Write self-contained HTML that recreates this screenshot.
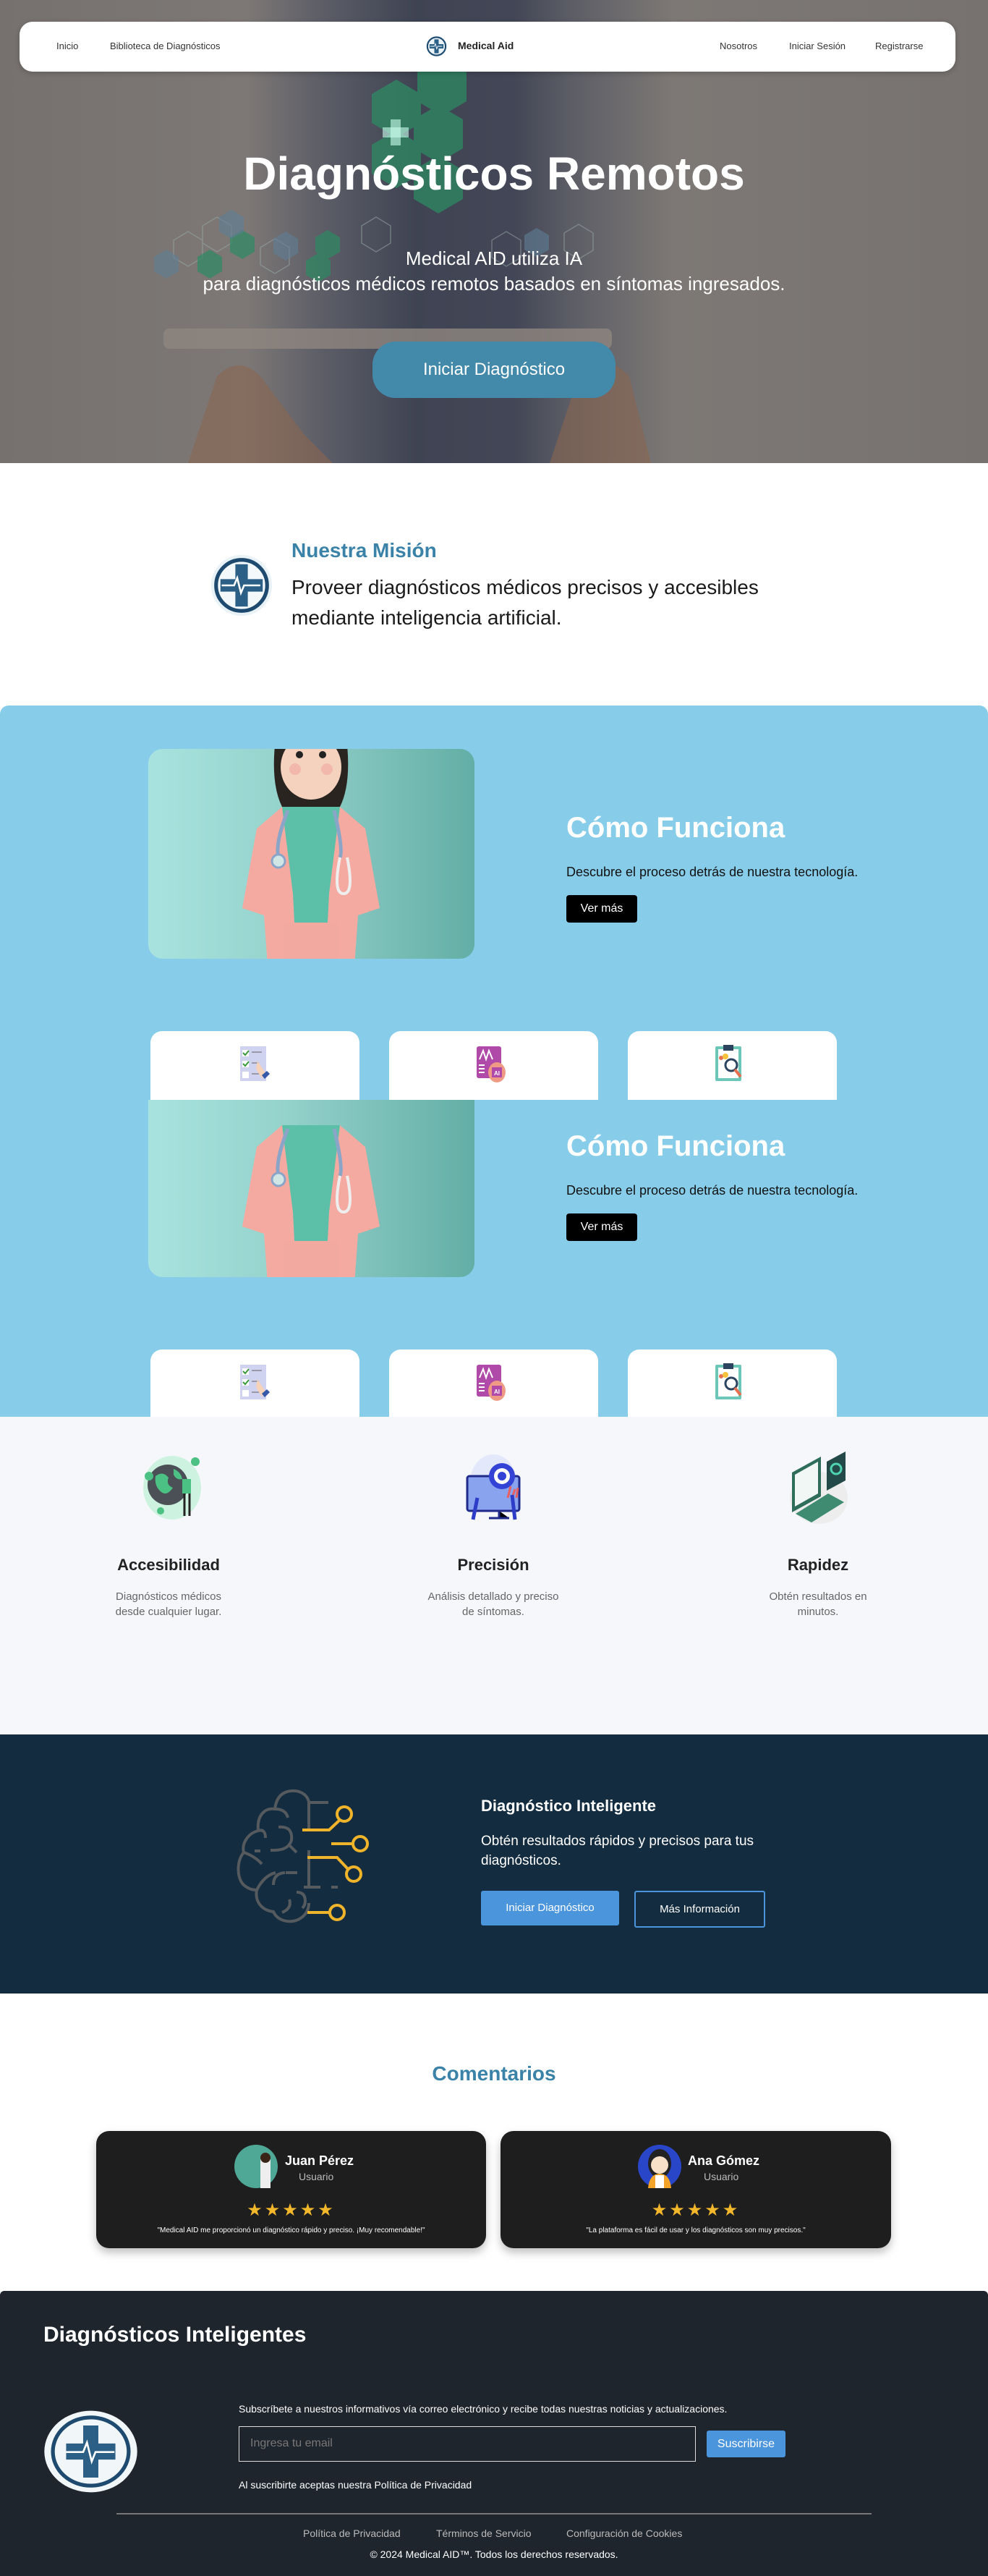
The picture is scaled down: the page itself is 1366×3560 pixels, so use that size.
<!DOCTYPE html>
<html><head><meta charset="utf-8">
<style>
*{margin:0;padding:0;box-sizing:border-box}
body{width:1366px;height:3560px;position:relative;font-family:"Liberation Sans",sans-serif;background:#fff;overflow:hidden}
.a{position:absolute}
.hero{left:0;top:0;width:1366px;height:640px;overflow:hidden;background:linear-gradient(90deg,#76716f 0%,#7d7876 25%,#5b5c66 33%,#3f4453 42%,#434656 52%,#5d5e66 58%,#7d7875 68%,#777270 100%)}
.nav{left:27px;top:30px;width:1294px;height:69px;background:#fff;border-radius:18px;box-shadow:0 2px 8px rgba(0,0,0,.2)}
.nav span{position:absolute;top:26px;font-size:13px;color:#333}
.c{text-align:center}
.card{background:#fff;border-radius:16px 16px 0 0}
.doc{border-radius:20px;overflow:hidden;background:linear-gradient(90deg,#a9e3df 0%,#96d3cd 40%,#63aea6 100%)}
.w{color:#fff}
</style></head><body>

<div class="a hero">
  <svg class="a" style="left:0;top:0" width="1366" height="640">
    <g fill="#2d8a63" opacity=".75">
      <polygon points="548,110 582,130 582,170 548,190 514,170 514,130"/>
      <polygon points="611,80 645,100 645,140 611,160 577,140 577,100"/>
      <polygon points="606,145 640,165 640,205 606,225 572,205 572,165"/>
      <polygon points="548,180 582,200 582,240 548,260 514,240 514,200"/>
      <polygon points="606,215 640,235 640,275 606,295 572,275 572,235"/>
    </g>
    <rect x="540" y="165" width="14" height="36" fill="#cfe" opacity=".6"/><rect x="529" y="176" width="36" height="14" fill="#cfe" opacity=".6"/>
    <g fill="none" stroke="#9aa" stroke-width="1.5" opacity=".5">
      <polygon points="260,320 280,332 280,356 260,368 240,356 240,332"/>
      <polygon points="300,300 320,312 320,336 300,348 280,336 280,312"/>
      <polygon points="380,330 400,342 400,366 380,378 360,366 360,342"/>
      <polygon points="520,300 540,312 540,336 520,348 500,336 500,312"/>
      <polygon points="700,320 720,332 720,356 700,368 680,356 680,332"/>
      <polygon points="800,310 820,322 820,346 800,358 780,346 780,322"/>
    </g>
    <g fill="#2d8a63" opacity=".7">
      <polygon points="335,318 352,328 352,348 335,358 318,348 318,328"/>
      <polygon points="453,318 470,328 470,348 453,358 436,348 436,328"/>
      <polygon points="290,345 307,355 307,375 290,385 273,375 273,355"/>
      <polygon points="440,350 457,360 457,380 440,390 423,380 423,360"/>
    </g>
    <g fill="#5f7f96" opacity=".6">
      <polygon points="320,290 337,300 337,320 320,330 303,320 303,300"/>
      <polygon points="395,320 412,330 412,350 395,360 378,350 378,330"/>
      <polygon points="742,315 759,325 759,345 742,355 725,345 725,325"/>
      <polygon points="230,345 247,355 247,375 230,385 213,375 213,355"/>
    </g>
    <rect x="226" y="454" width="620" height="28" rx="8" fill="#8f8680" opacity=".8"/>
    <path d="M260,640 L300,520 Q330,490 360,520 L420,600 L460,640Z M760,640 L800,520 Q830,480 870,520 L900,640Z" fill="#8a6650" opacity=".6"/>
  </svg>
  <div class="a nav">
    <span style="left:51px">Inicio</span>
    <span style="left:125px">Biblioteca de Diagnósticos</span>
    <svg class="a" style="left:560px;top:19px" width="33" height="30" viewBox="0 0 100 100"><ellipse cx="50" cy="50" rx="48" ry="48" fill="#eaf3f8"/><circle cx="50" cy="50" r="42" fill="none" stroke="#1d4a6e" stroke-width="7"/><path d="M40,18h20v22h22v20h-22v22h-20v-22h-22v-20h22z" fill="#2b5f86"/><path d="M22,50h18l5,-12l6,24l5,-12h20" stroke="#fff" stroke-width="3" fill="none"/></svg>
    <span style="left:606px;font-weight:bold;color:#222;font-size:14px;top:25px">Medical Aid</span>
    <span style="left:968px">Nosotros</span>
    <span style="left:1064px">Iniciar Sesión</span>
    <span style="left:1183px">Registrarse</span>
  </div>
  <div class="a c w" style="left:0;width:1366px;top:200px;font-size:64px;font-weight:bold;line-height:80px">Diagnósticos Remotos</div>
  <div class="a c w" style="left:0;width:1366px;top:340px;font-size:26px;line-height:35px">Medical AID utiliza IA<br>para diagnósticos médicos remotos basados en síntomas ingresados.</div>
  <div class="a c w" style="left:515px;top:472px;width:336px;height:78px;border-radius:32px;background:#4389a9;font-size:24px;line-height:78px">Iniciar Diagnóstico</div>
</div>

<!-- mission -->
<svg class="a" style="left:287px;top:766px" width="94" height="86" viewBox="0 0 100 100"><ellipse cx="50" cy="50" rx="49" ry="49" fill="#e8f2f7"/><circle cx="50" cy="50" r="41" fill="#f3f8fb" stroke="#1d4a6e" stroke-width="6"/><path d="M40,16h20v24h24v20h-24v24h-20v-24h-24v-20h24z" fill="#2b5f86"/><path d="M18,50h20l5,-12l6,24l5,-12h26" stroke="#fff" stroke-width="3" fill="none"/></svg>
<div class="a" style="left:403px;top:745px;font-size:28px;font-weight:bold;color:#3a82a8">Nuestra Misión</div>
<div class="a" style="left:403px;top:791px;font-size:28px;line-height:42px;color:#1a1a1a">Proveer diagnósticos médicos precisos y accesibles<br>mediante inteligencia artificial.</div>

<!-- blue section -->
<div class="a" style="left:0;top:975px;width:1366px;height:983px;background:#87cdea;border-radius:12px 12px 0 0"></div>

<div class="a doc" style="left:205px;top:1035px;width:451px;height:290px">
  <svg width="451" height="290"><g transform="translate(225,0)">
    <path d="M-50,-5 Q-55,50 -40,80 L40,80 Q55,50 50,-5Z" fill="#2a2420"/>
    <ellipse cx="0" cy="25" rx="42" ry="45" fill="#f4d2bd"/>
    <circle cx="-16" cy="8" r="5" fill="#222"/><circle cx="16" cy="8" r="5" fill="#222"/>
    <circle cx="-22" cy="28" r="8" fill="#f0a6a0" opacity=".6"/><circle cx="22" cy="28" r="8" fill="#f0a6a0" opacity=".6"/>
    <rect x="-40" y="80" width="80" height="160" fill="#5cc0a8"/>
    <path d="M-40,80 L-75,110 L-95,220 L-65,230 L-60,300 L-20,300 L-25,200 L-40,80Z" fill="#f4aaa0"/>
    <path d="M40,80 L75,110 L95,220 L65,230 L60,300 L20,300 L25,200 L40,80Z" fill="#f4aaa0"/>
    <rect x="-38" y="240" width="76" height="60" fill="#f2a9a0"/>
    <path d="M-32,85 Q-50,130 -45,150 M32,85 Q45,140 40,150" stroke="#8aa5c8" stroke-width="5" fill="none"/>
    <circle cx="-45" cy="155" r="9" fill="#cfe6e5" stroke="#8aa5c8" stroke-width="3"/>
    <path d="M40,150 Q30,200 45,200 Q60,200 50,150" stroke="#eee" stroke-width="4" fill="none"/>
  </g></svg>
</div>
<div class="a w" style="left:783px;top:1122px;font-size:40px;font-weight:bold">Cómo Funciona</div>
<div class="a" style="left:783px;top:1195px;font-size:18px;color:#111">Descubre el proceso detrás de nuestra tecnología.</div>
<div class="a c w" style="left:783px;top:1237px;width:98px;height:38px;background:#000;border-radius:4px;font-size:16px;line-height:38px">Ver más</div>

<div class="a doc" style="left:205px;top:1520px;width:451px;height:245px;border-radius:0 0 20px 20px">
  <svg width="451" height="245"><g transform="translate(225,-45)">
    <rect x="-40" y="80" width="80" height="160" fill="#5cc0a8"/>
    <path d="M-40,80 L-75,110 L-95,220 L-65,230 L-60,300 L-20,300 L-25,200 L-40,80Z" fill="#f4aaa0"/>
    <path d="M40,80 L75,110 L95,220 L65,230 L60,300 L20,300 L25,200 L40,80Z" fill="#f4aaa0"/>
    <rect x="-38" y="240" width="76" height="60" fill="#f2a9a0"/>
    <path d="M-32,85 Q-50,130 -45,150 M32,85 Q45,140 40,150" stroke="#8aa5c8" stroke-width="5" fill="none"/>
    <circle cx="-45" cy="155" r="9" fill="#cfe6e5" stroke="#8aa5c8" stroke-width="3"/>
    <path d="M40,150 Q30,200 45,200 Q60,200 50,150" stroke="#eee" stroke-width="4" fill="none"/>
  </g></svg>
</div>
<div class="a w" style="left:783px;top:1562px;font-size:40px;font-weight:bold">Cómo Funciona</div>
<div class="a" style="left:783px;top:1635px;font-size:18px;color:#111">Descubre el proceso detrás de nuestra tecnología.</div>
<div class="a c w" style="left:783px;top:1677px;width:98px;height:38px;background:#000;border-radius:4px;font-size:16px;line-height:38px">Ver más</div>

<!-- cards row 1 and 2 -->
<div class="a card" style="left:208px;top:1425px;width:289px;height:95px"></div>
<div class="a card" style="left:538px;top:1425px;width:289px;height:95px"></div>
<div class="a card" style="left:868px;top:1425px;width:289px;height:95px"></div>
<div class="a card" style="left:208px;top:1865px;width:289px;height:93px"></div>
<div class="a card" style="left:538px;top:1865px;width:289px;height:93px"></div>
<div class="a card" style="left:868px;top:1865px;width:289px;height:93px"></div>

<svg class="a" style="left:0;top:0" width="1366" height="1960">
  <defs>
    <g id="i1"><rect x="0" y="0" width="36" height="48" fill="#cfd3f0"/><rect x="3" y="5" width="9" height="9" fill="#fff"/><rect x="3" y="20" width="9" height="9" fill="#fff"/><rect x="3" y="35" width="9" height="9" fill="#fff"/><path d="M4,9l3,3l5,-6M4,24l3,3l5,-6" stroke="#3a9a3a" stroke-width="2" fill="none"/><path d="M16,8h14M16,23h10M16,38h14" stroke="#99a" stroke-width="2"/><path d="M24,20q6,10 12,18l-6,6q-6,-8 -8,-14z" fill="#f6d2b8"/><path d="M30,40l7,-6l4,4l-7,7z" fill="#3558a8"/></g>
    <g id="i2"><rect x="0" y="0" width="34" height="44" rx="3" fill="#b04aa8"/><path d="M4,18l5,-12l4,12l4,-12l5,12" stroke="#fff" stroke-width="2" fill="none"/><path d="M3,26h8M3,31h8M3,36h8" stroke="#fff" stroke-width="2"/><ellipse cx="28" cy="36" rx="12" ry="14" fill="#ee9a84"/><rect x="21" y="29" width="14" height="14" fill="#b04aa8"/><text x="28" y="40" font-size="8" fill="#fff" text-anchor="middle" font-family="Liberation Sans" font-weight="bold">AI</text></g>
    <g id="i3"><rect x="0" y="2" width="36" height="48" rx="2" fill="#6cc7b8"/><rect x="4" y="6" width="28" height="40" fill="#fff"/><rect x="11" y="0" width="14" height="8" fill="#2c4460"/><circle cx="8" cy="18" r="3" fill="#e87050"/><circle cx="14" cy="16" r="4" fill="#f5c23a"/><circle cx="22" cy="28" r="8" fill="none" stroke="#2c4460" stroke-width="3"/><path d="M27,34l8,10" stroke="#e87050" stroke-width="4"/></g>
  </defs>
  <use href="#i1" transform="translate(332,1446)"/><use href="#i2" transform="translate(659,1446)"/><use href="#i3" transform="translate(989,1444)"/>
  <use href="#i1" transform="translate(332,1886)"/><use href="#i2" transform="translate(659,1886)"/><use href="#i3" transform="translate(989,1884)"/>
</svg>

<!-- features -->
<div class="a" style="left:0;top:1958px;width:1366px;height:439px;background:#f6f7fb"></div>
<svg class="a" style="left:0;top:2000px" width="1366" height="110">
  <ellipse cx="238" cy="56" rx="40" ry="44" fill="#cdf3e0"/>
  <circle cx="232" cy="52" r="28" fill="#4a5056"/>
  <path d="M215,40q10,-8 18,2q-4,10 6,14q-8,12 -16,6q-10,-8 -8,-22zM240,30q10,4 12,14q-8,2 -12,-6z" fill="#4cc184"/>
  <path d="M255,60l0,35M262,60l0,35" stroke="#222" stroke-width="3"/><rect x="252" y="44" width="12" height="20" fill="#4cc184"/>
  <circle cx="206" cy="40" r="6" fill="#4cc184"/><circle cx="270" cy="20" r="6" fill="#4cc184"/><circle cx="222" cy="88" r="5" fill="#4cc184"/>
  <ellipse cx="682" cy="48" rx="32" ry="38" fill="#e3e8fb"/>
  <rect x="646" y="40" width="72" height="48" rx="3" fill="#8aa3ef" stroke="#1f2a8a" stroke-width="3"/>
  <circle cx="694" cy="40" r="18" fill="#3343d6"/><circle cx="694" cy="40" r="11" fill="#fff"/><circle cx="694" cy="40" r="6" fill="#3343d6"/>
  <path d="M690,88v10h-14h28" stroke="#1f2a8a" stroke-width="3"/><path d="M702,70l4,-16M708,70l4,-12M714,70l2,-14" stroke="#e86060" stroke-width="3"/>
  <path d="M660,70l-6,30M708,66l4,34" stroke="#2d3dc8" stroke-width="5"/>
  <ellipse cx="1132" cy="70" rx="40" ry="36" fill="#ededed"/>
  <path d="M1095,35l40,-22v55l-40,22z" fill="#2d6d5a"/><path d="M1099,38l32,-18v44l-32,18z" fill="#f0f7f5"/>
  <path d="M1100,92l45,-28l22,12l-45,28z" fill="#3e8b72"/>
  <path d="M1143,20l26,-14v40l-26,14z" fill="#234a48"/><circle cx="1156" cy="30" r="7" fill="none" stroke="#4fd3b0" stroke-width="3"/>
</svg>
<div class="a c" style="left:83px;width:300px;top:2150px;font-size:22px;font-weight:bold;color:#222">Accesibilidad</div>
<div class="a c" style="left:83px;width:300px;top:2196px;font-size:15px;line-height:21px;color:#666">Diagnósticos médicos<br>desde cualquier lugar.</div>
<div class="a c" style="left:532px;width:300px;top:2150px;font-size:22px;font-weight:bold;color:#222">Precisión</div>
<div class="a c" style="left:532px;width:300px;top:2196px;font-size:15px;line-height:21px;color:#666">Análisis detallado y preciso<br>de síntomas.</div>
<div class="a c" style="left:981px;width:300px;top:2150px;font-size:22px;font-weight:bold;color:#222">Rapidez</div>
<div class="a c" style="left:981px;width:300px;top:2196px;font-size:15px;line-height:21px;color:#666">Obtén resultados en<br>minutos.</div>

<!-- dark section -->
<div class="a" style="left:0;top:2397px;width:1366px;height:358px;background:#132c40"></div>
<svg class="a" style="left:300px;top:2460px" width="230" height="210" fill="none" stroke-width="4" stroke-linecap="butt">
  <g stroke="#555a5e">
    <path d="M127,30 C124,18 112,14 103,15 C90,16 82,24 80,40 C65,38 55,50 57,70 C42,74 34,88 37,100 C27,112 27,135 37,145 C45,152 52,152 55,152 C52,168 62,180 78,182 C84,195 100,198 112,193 C122,188 127,180 127,170"/>
    <path d="M127,30v38M127,31h27M127,97v52M120,148h23M158,148h9M80,40q15,0 18,12M57,70q10,-3 10,10M85,65q20,-2 18,18q-4,14 -24,14h-5M60,98h-8M100,90l10,10M37,100q15,5 25,16M55,152q10,-20 26,-24M95,128h16M78,145q0,-16 16,-17M110,155q12,0 12,12q0,6 -4,10M100,165q4,12 -10,18"/>
  </g>
  <g stroke="#f0b42a">
    <path d="M118,69h37l15,-14"/><circle cx="176" cy="47" r="10"/>
    <path d="M158,88h29"/><circle cx="198" cy="88" r="10"/>
    <path d="M125,107h41l16,17"/><circle cx="189" cy="130" r="10"/>
    <path d="M125,183h31"/><circle cx="166" cy="183" r="10"/>
  </g>
</svg>
<div class="a w" style="left:665px;top:2483px;font-size:22px;font-weight:bold">Diagnóstico Inteligente</div>
<div class="a w" style="left:665px;top:2531px;font-size:19px;line-height:27px">Obtén resultados rápidos y precisos para tus<br>diagnósticos.</div>
<div class="a c w" style="left:665px;top:2613px;width:191px;height:48px;background:#4a95dc;border-radius:3px;font-size:15px;line-height:48px">Iniciar Diagnóstico</div>
<div class="a c w" style="left:877px;top:2613px;width:181px;height:51px;border:2px solid #4a95dc;border-radius:3px;font-size:15px;line-height:47px">Más Información</div>

<!-- comments -->
<div class="a c" style="left:0;width:1366px;top:2850px;font-size:28px;font-weight:bold;color:#3a82a8">Comentarios</div>
<div class="a" style="left:133px;top:2945px;width:539px;height:162px;background:#1e1e1e;border-radius:18px;box-shadow:0 6px 12px rgba(0,0,0,.25)"></div>
<div class="a" style="left:692px;top:2945px;width:540px;height:162px;background:#1e1e1e;border-radius:18px;box-shadow:0 6px 12px rgba(0,0,0,.25)"></div>
<svg class="a" style="left:324px;top:2964px" width="60" height="60"><circle cx="30" cy="30" r="30" fill="#4fa795"/><rect x="36" y="20" width="14" height="40" fill="#eee"/><circle cx="43" cy="18" r="7" fill="#3a2418"/></svg>
<svg class="a" style="left:882px;top:2964px" width="60" height="60"><circle cx="30" cy="30" r="30" fill="#2a46c8"/><ellipse cx="30" cy="26" rx="16" ry="20" fill="#222"/><circle cx="30" cy="28" r="12" fill="#f8e0c8"/><path d="M14,60q2,-20 16,-20q14,0 16,20z" fill="#f4a428"/><rect x="24" y="42" width="12" height="18" fill="#fff"/></svg>
<div class="a w" style="left:394px;top:2976px;font-size:18px;font-weight:bold">Juan Pérez</div>
<div class="a" style="left:413px;top:3000px;font-size:14px;color:#bbb">Usuario</div>
<div class="a w" style="left:951px;top:2976px;font-size:18px;font-weight:bold">Ana Gómez</div>
<div class="a" style="left:973px;top:3000px;font-size:14px;color:#bbb">Usuario</div>
<div class="a c" style="left:133px;width:539px;top:3040px;font-size:24px;letter-spacing:3px;color:#f2b72a">★★★★★</div>
<div class="a c" style="left:692px;width:540px;top:3040px;font-size:24px;letter-spacing:3px;color:#f2b72a">★★★★★</div>
<div class="a c w" style="left:133px;width:539px;top:3077px;font-size:10px">"Medical AID me proporcionó un diagnóstico rápido y preciso. ¡Muy recomendable!"</div>
<div class="a c w" style="left:692px;width:540px;top:3077px;font-size:10px">"La plataforma es fácil de usar y los diagnósticos son muy precisos."</div>

<!-- footer -->
<div class="a" style="left:0;top:3166px;width:1366px;height:394px;background:#1f252d;border-radius:6px 6px 0 0"></div>
<div class="a w" style="left:60px;top:3210px;font-size:30px;font-weight:bold">Diagnósticos Inteligentes</div>
<svg class="a" style="left:60px;top:3331px" width="131" height="114" viewBox="0 0 100 87"><ellipse cx="50" cy="43.5" rx="49" ry="43" fill="#f1f6f9"/><ellipse cx="50" cy="43.5" rx="40" ry="36" fill="none" stroke="#1d4a6e" stroke-width="4"/><path d="M42,16h16v19h18v17h-18v19h-16v-19h-18v-17h18z" fill="#2b5f86"/><path d="M24,44h18l4,-10l5,20l4,-10h20" stroke="#fff" stroke-width="2" fill="none"/></svg>
<div class="a w" style="left:330px;top:3321px;font-size:14px">Subscríbete a nuestros informativos vía correo electrónico y recibe todas nuestras noticias y actualizaciones.</div>
<div class="a" style="left:330px;top:3353px;width:632px;height:49px;border:1px solid #ddd;font-size:16px;color:#777;padding:14px 15px">Ingresa tu email</div>
<div class="a c w" style="left:977px;top:3359px;width:109px;height:37px;background:#4a95dc;border-radius:3px;font-size:16px;line-height:37px">Suscribirse</div>
<div class="a w" style="left:330px;top:3426px;font-size:14px">Al suscribirte aceptas nuestra Política de Privacidad</div>
<div class="a" style="left:161px;top:3473px;width:1044px;height:2px;background:#777"></div>
<div class="a" style="left:419px;top:3493px;font-size:14px;color:#bbb">Política de Privacidad</div>
<div class="a" style="left:603px;top:3493px;font-size:14px;color:#bbb">Términos de Servicio</div>
<div class="a" style="left:783px;top:3493px;font-size:14px;color:#bbb">Configuración de Cookies</div>
<div class="a c w" style="left:0;width:1366px;top:3522px;font-size:14px">© 2024 Medical AID™. Todos los derechos reservados.</div>
</body></html>
